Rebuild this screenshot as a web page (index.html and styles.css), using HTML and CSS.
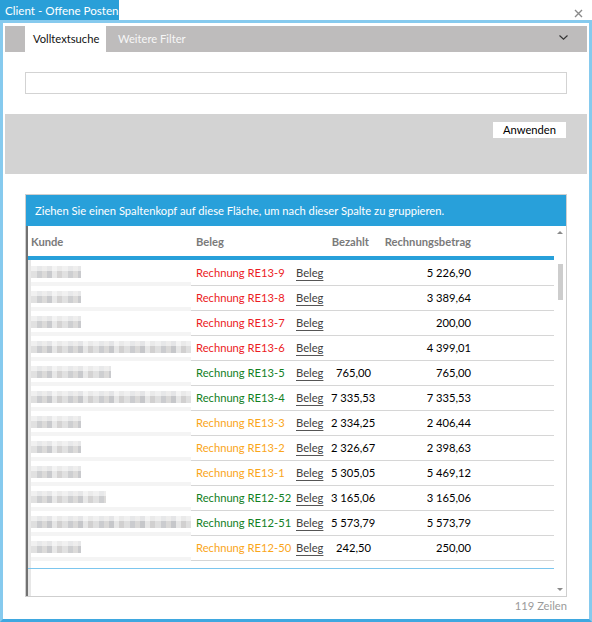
FILE: index.html
```html
<!DOCTYPE html>
<html lang="de">
<head>
<meta charset="utf-8">
<title>Client - Offene Posten</title>
<link rel="stylesheet" href="styles.css">
</head>
<body>
<div class="titlebar">
  <div class="title">Client - Offene Posten</div>
  <div class="close">
    <svg width="9" height="9" viewBox="0 0 9 9"><path d="M1 1 L8 8 M8 1 L1 8" stroke="#8a8a8a" stroke-width="1.4" fill="none"/></svg>
  </div>
</div>
<div class="window">
  <div class="tabbar">
    <div class="tab-spacer"></div>
    <div class="tab active">Volltextsuche</div>
    <div class="tab">Weitere Filter</div>
    <div class="chevron">
      <svg width="9" height="5" viewBox="0 0 9 5"><path d="M0.5 0.5 L4.5 4.2 L8.5 0.5" stroke="#333" stroke-width="1.1" fill="none"/></svg>
    </div>
  </div>
  <div class="search"></div>
  <div class="filterpanel">
    <div class="btn">Anwenden</div>
  </div>
  <div class="grid">
    <div class="grouppanel">Ziehen Sie einen Spaltenkopf auf diese Fläche, um nach dieser Spalte zu gruppieren.</div>
    <div class="gridbody">
      <div class="gutter"></div>
      <div class="main">
        <div class="hrow">
          <div class="hc">Kunde</div>
          <div class="hc hpad">Beleg</div>
          <div class="hc"></div>
          <div class="hc num hbez">Bezahlt</div>
          <div class="hc num">Rechnungsbetrag</div>
          <div class="hc"></div>
        </div>
        <div class="rows">
          <div class="row"><div class="kc"><span class="nm" style="width:50px"></span></div><div class="c red">Rechnung RE13-9</div><div class="c"><span class="lnk">Beleg</span></div><div class="c num"></div><div class="c num">5 226,90</div><div class="c"></div></div>
          <div class="row"><div class="kc"><span class="nm" style="width:50px"></span></div><div class="c red">Rechnung RE13-8</div><div class="c"><span class="lnk">Beleg</span></div><div class="c num"></div><div class="c num">3 389,64</div><div class="c"></div></div>
          <div class="row"><div class="kc"><span class="nm" style="width:50px"></span></div><div class="c red">Rechnung RE13-7</div><div class="c"><span class="lnk">Beleg</span></div><div class="c num"></div><div class="c num">200,00</div><div class="c"></div></div>
          <div class="row"><div class="kc"><span class="nm long" style="width:160px"></span></div><div class="c red">Rechnung RE13-6</div><div class="c"><span class="lnk">Beleg</span></div><div class="c num"></div><div class="c num">4 399,01</div><div class="c"></div></div>
          <div class="row"><div class="kc"><span class="nm" style="width:80px"></span></div><div class="c green">Rechnung RE13-5</div><div class="c"><span class="lnk">Beleg</span></div><div class="c num">765,00</div><div class="c num">765,00</div><div class="c"></div></div>
          <div class="row"><div class="kc"><span class="nm long" style="width:160px"></span></div><div class="c green">Rechnung RE13-4</div><div class="c"><span class="lnk">Beleg</span></div><div class="c num">7 335,53</div><div class="c num">7 335,53</div><div class="c"></div></div>
          <div class="row"><div class="kc"><span class="nm" style="width:50px"></span></div><div class="c orange">Rechnung RE13-3</div><div class="c"><span class="lnk">Beleg</span></div><div class="c num">2 334,25</div><div class="c num">2 406,44</div><div class="c"></div></div>
          <div class="row"><div class="kc"><span class="nm" style="width:50px"></span></div><div class="c orange">Rechnung RE13-2</div><div class="c"><span class="lnk">Beleg</span></div><div class="c num">2 326,67</div><div class="c num">2 398,63</div><div class="c"></div></div>
          <div class="row"><div class="kc"><span class="nm" style="width:50px"></span></div><div class="c orange">Rechnung RE13-1</div><div class="c"><span class="lnk">Beleg</span></div><div class="c num">5 305,05</div><div class="c num">5 469,12</div><div class="c"></div></div>
          <div class="row"><div class="kc"><span class="nm" style="width:75px"></span></div><div class="c green">Rechnung RE12-52</div><div class="c"><span class="lnk">Beleg</span></div><div class="c num">3 165,06</div><div class="c num">3 165,06</div><div class="c"></div></div>
          <div class="row"><div class="kc"><span class="nm long" style="width:160px"></span></div><div class="c green">Rechnung RE12-51</div><div class="c"><span class="lnk">Beleg</span></div><div class="c num">5 573,79</div><div class="c num">5 573,79</div><div class="c"></div></div>
          <div class="row"><div class="kc"><span class="nm" style="width:50px"></span></div><div class="c orange">Rechnung RE12-50</div><div class="c"><span class="lnk">Beleg</span></div><div class="c num">242,50</div><div class="c num">250,00</div><div class="c"></div></div>
          <div class="empty"><div class="newline"></div></div>
        </div>
      </div>
      <div class="scrollbar">
        <div class="arrow up"></div>
        <div class="thumb"></div>
        <div class="arrow down"></div>
      </div>
    </div>
  </div>
  <div class="footer">119 Zeilen</div>
</div>
</body>
</html>
```

FILE: styles.css
```css
* { box-sizing: border-box; }
html, body { margin: 0; padding: 0; }
body {
  width: 592px;
  height: 622px;
  overflow: hidden;
  background: #fff;
  font-family: "Lato", "Noto Sans", sans-serif;
  font-size: 11.2px;
  color: #000;
}
.titlebar { display: flex; height: 20px; }
.title {
  width: 119px;
  background: #2a9fd8;
  color: #fff;
  line-height: 21px;
  padding-left: 5px;
  font-size: 11.6px;
  white-space: nowrap;
  overflow: hidden;
}
.close { margin-left: auto; width: 18px; padding-top: 7px; }
.window {
  height: 602px;
  border: 3px solid #86caee;
  border-bottom-color: #3fa8e0;
  display: flex;
  flex-direction: column;
}
.tabbar {
  margin: 3px 2px 0;
  height: 26px;
  background: #bebcbc;
  display: flex;
  align-items: stretch;
}
.tab-spacer { width: 20px; }
.tab {
  padding: 0 8px 0 8px;
  line-height: 26px;
  color: #f7f7f7;
  white-space: nowrap;
}
.tab.active { background: #fff; color: #111; width: 81px; }
.tab + .tab { padding-left: 12px; }
.chevron { margin-left: auto; width: 28px; padding-top: 9px; line-height: 0; }
.search {
  margin: 20px 0 0 22px;
  width: 542px;
  height: 22px;
  border: 1px solid #d3d3d3;
}
.filterpanel {
  margin: 20px 2px 0;
  height: 60px;
  background: #d3d3d3;
  display: flex;
  justify-content: flex-end;
  align-items: flex-start;
  padding: 8px 21px 0 0;
}
.btn {
  width: 73px;
  height: 16px;
  background: #fff;
  line-height: 16px;
  text-align: center;
}
.grid {
  margin: 20px 0 0 22px;
  width: 542px;
  height: 403px;
  border: 1px solid #cfcfcf;
  display: flex;
  flex-direction: column;
}
.grouppanel {
  height: 31px;
  background: #28a0da;
  color: #fff;
  line-height: 32px;
  padding-left: 9px;
  white-space: nowrap;
}
.gridbody { flex: 1; display: flex; }
.gutter { width: 2px; background: #727272; }
.main { width: 526px; display: flex; flex-direction: column; }
.hrow {
  height: 34px;
  border-bottom: 4px solid #28a0da;
  display: grid;
  grid-template-columns: 163px 100px 40px 43px 100px 1fr;
  align-items: center;
  color: #7a7a7a;
  font-weight: 700;
}
.hrow .hc:first-child { padding-left: 3px; }
.hpad { padding-left: 5px; }
.hbez { padding-right: 5px !important; }
.rows {
  flex: 1;
  border-left: 3px solid #e7e7e7;
  display: flex;
  flex-direction: column;
}
.row {
  height: 25px;
  display: grid;
  grid-template-columns: 160px 100px 40px 43px 100px 1fr;
}
.row .c {
  border-bottom: 1px solid #d6d6d6;
  line-height: 25px;
  white-space: nowrap;
  padding-left: 5px;
}
.kc {
  box-shadow: inset 0 -4px 0 #f4f4f4;
  padding-top: 6px;
}
.nm {
  display: block;
  height: 12px;
  background-image:
    linear-gradient(to bottom, rgba(255,255,255,0.55) 0 45%, rgba(255,255,255,0) 45%),
    repeating-linear-gradient(90deg, #dcdcdc 0 6px, #c6c7ca 6px 11px, #d6d5d4 11px 16px, #c0c1c5 16px 21px, #e4e4e4 21px 26px, #cdcccc 26px 31px);
  filter: blur(0.7px);
  opacity: 0.85;
}
.nm.long { opacity: 0.9; }
.row .num, .hrow .num { text-align: right; padding-right: 3px; padding-left: 0; }
.red { color: #ec1c24; }
.green { color: #12801e; }
.orange { color: #faa61a; }
.lnk {
  color: #404040;
  text-decoration: underline;
  text-decoration-color: #555;
  text-underline-offset: 3px;
}
.empty { flex: 1; padding-top: 8px; margin-left: -3px; }
.newline { height: 1px; background: #7cc6ee; }
.scrollbar {
  width: 12px;
  display: flex;
  flex-direction: column;
  align-items: center;
  padding: 5px 0 5px;
}
.arrow { width: 0; height: 0; border-left: 3px solid transparent; border-right: 3px solid transparent; }
.arrow.up { border-bottom: 3px solid #8a8a8a; }
.arrow.down { border-top: 3px solid #8a8a8a; margin-top: auto; }
.thumb { width: 5px; height: 36px; background: #cdcdcd; margin-top: 30px; }
.footer {
  margin: 0 22px 0 0;
  text-align: right;
  color: #9a9a9a;
  line-height: 17px;
}
```
